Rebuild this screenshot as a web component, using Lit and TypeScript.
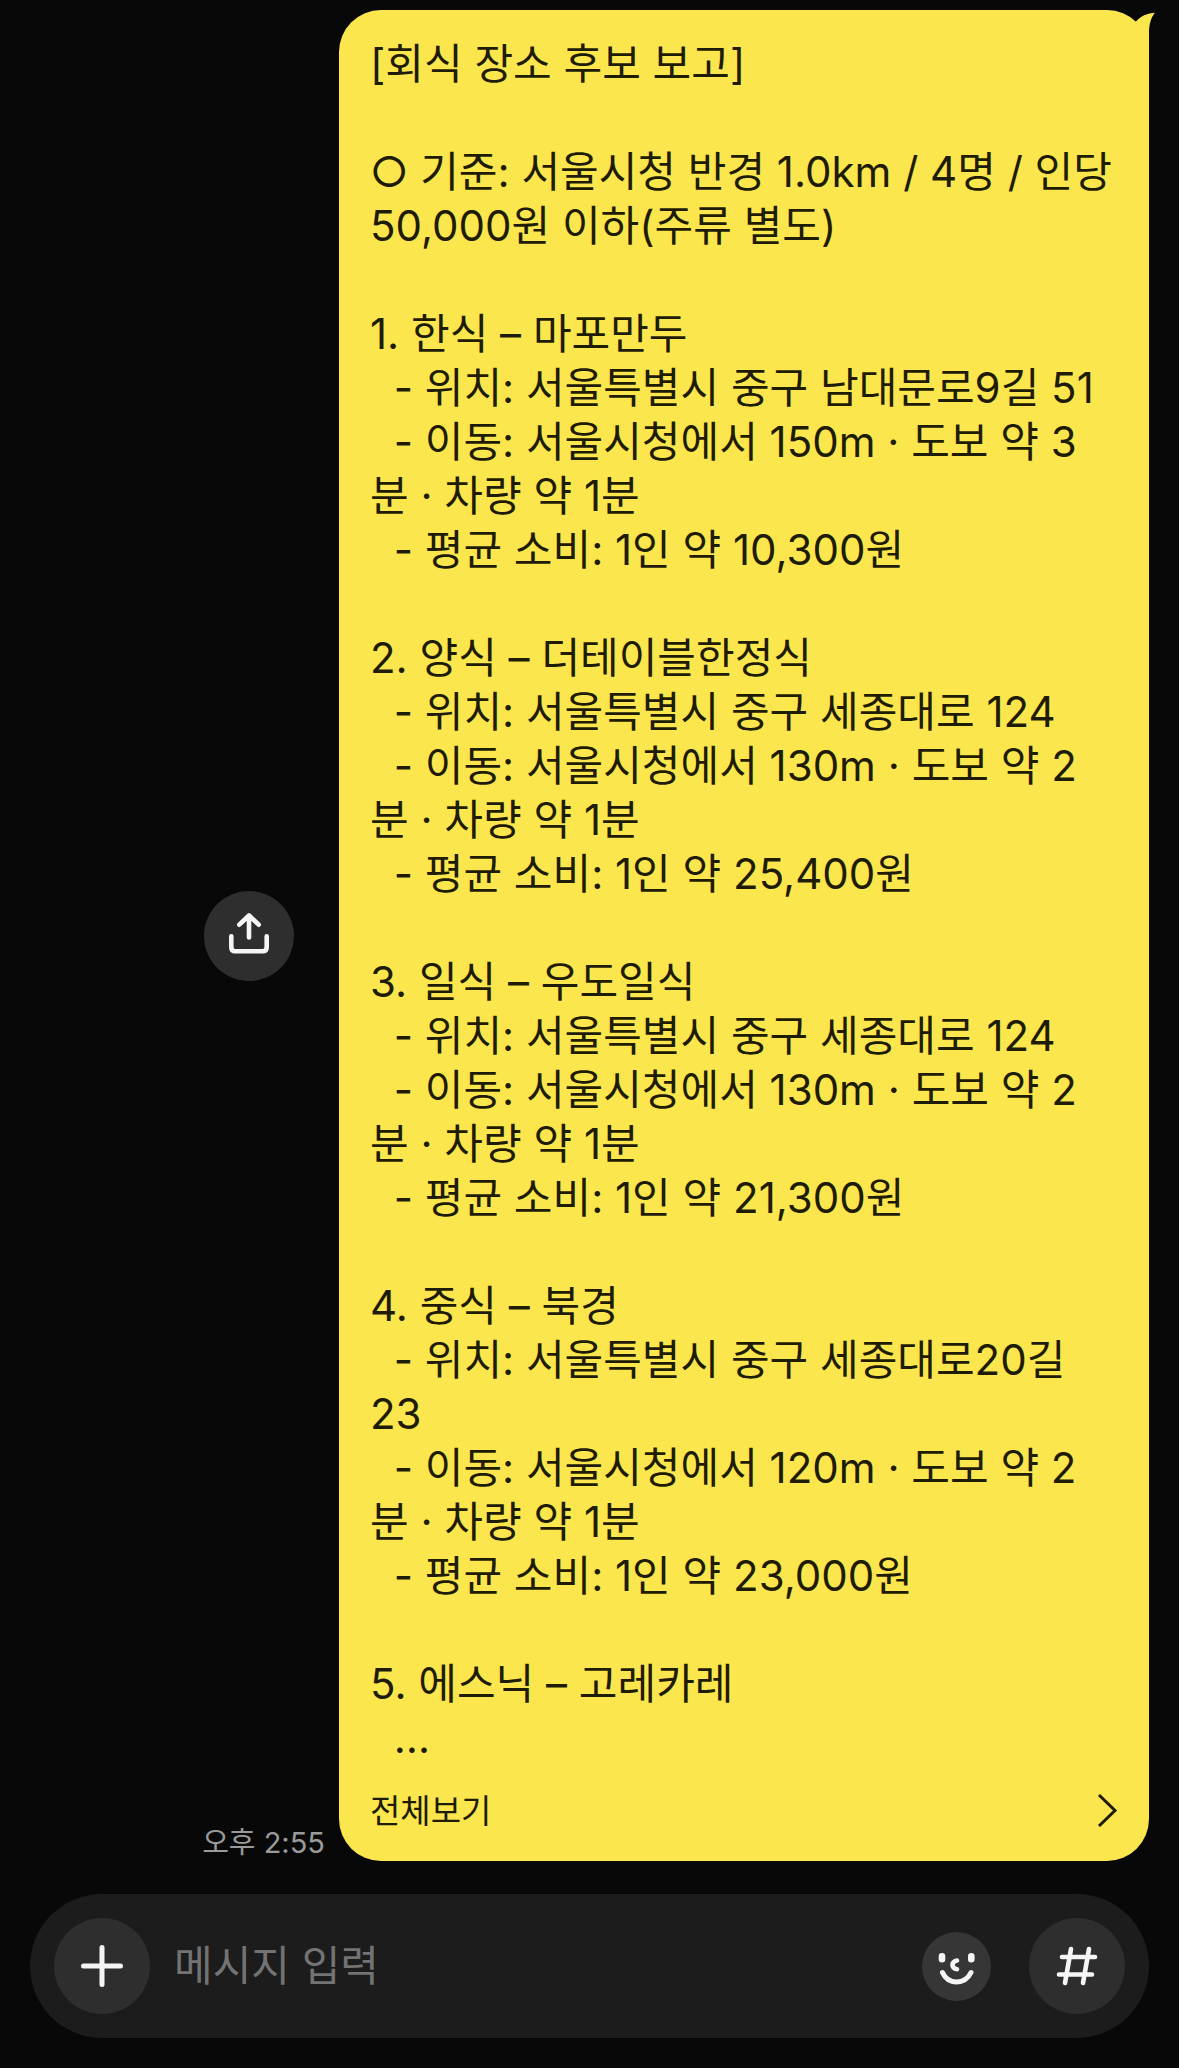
import { LitElement, html, css } from 'lit';
import { customElement, property } from 'lit/decorators.js';

// \u00a0 keeps the middle dot on the same line as the word before it
const MESSAGE = `[회식 장소 후보 보고]

○ 기준: 서울시청 반경 1.0km / 4명 / 인당 50,000원 이하(주류 별도)

1. 한식 – 마포만두
  - 위치: 서울특별시 중구 남대문로9길 51
  - 이동: 서울시청에서 150m\u00a0· 도보 약 3분\u00a0· 차량 약 1분
  - 평균 소비: 1인 약 10,300원

2. 양식 – 더테이블한정식
  - 위치: 서울특별시 중구 세종대로 124
  - 이동: 서울시청에서 130m\u00a0· 도보 약 2분\u00a0· 차량 약 1분
  - 평균 소비: 1인 약 25,400원

3. 일식 – 우도일식
  - 위치: 서울특별시 중구 세종대로 124
  - 이동: 서울시청에서 130m\u00a0· 도보 약 2분\u00a0· 차량 약 1분
  - 평균 소비: 1인 약 21,300원

4. 중식 – 북경
  - 위치: 서울특별시 중구 세종대로20길 23
  - 이동: 서울시청에서 120m\u00a0· 도보 약 2분\u00a0· 차량 약 1분
  - 평균 소비: 1인 약 23,000원

5. 에스닉 – 고레카레
  …`;

@customElement('chat-message')
export class ChatMessage extends LitElement {
  @property() text = '';
  @property() time = '';

  static styles = css`
    :host {
      display: flex;
      justify-content: flex-end;
    }

    .side {
      display: grid;
      justify-items: end;
    }

    .side__share,
    .side__time {
      grid-area: 1 / 1;
    }

    .side__share {
      align-self: center;
      display: grid;
      place-items: center;
      width: 90px;
      height: 90px;
      margin-right: 45px;
      padding: 0;
      border: 0;
      border-radius: 50%;
      background: #2e2e2e;
      color: #f5f5f5;
    }

    .side__time {
      align-self: end;
      margin-right: 14px;
      color: #9a9a9a;
      font-size: 29px;
      line-height: 36px;
      white-space: nowrap;
    }

    .bubble {
      position: relative;
      box-sizing: border-box;
      flex: 0 1 810px;
      min-width: 0;
      padding: 27px 28px 0 31px;
      border-radius: 42px;
      background: #fbe74d;
      color: #1f1c06;
    }

    .bubble__tail {
      position: absolute;
      top: 0;
      right: -6px;
      fill: #fbe74d;
    }

    .bubble__text {
      margin: 0;
      font-size: 42px;
      line-height: 54px;
      white-space: pre-wrap;
    }

    .bubble__more {
      display: flex;
      align-items: center;
      justify-content: space-between;
      width: 100%;
      padding: 22px 0 26px;
      border: 0;
      background: none;
      color: inherit;
      font: inherit;
      font-size: 33px;
      line-height: 48px;
    }
  `;

  render() {
    return html`
      <div class="side">
        <button class="side__share" aria-label="공유">
          <svg width="48" height="48" viewBox="0 0 48 48" fill="none" stroke="currentColor" stroke-width="4.600" stroke-linecap="round" stroke-linejoin="round">
            <path d="M24 25.500V4M14.300 12.700L24 3.500L33.700 12.700" />
            <path d="M6.300 24.300V35.300Q6.300 39.300 10.300 39.300H37.700Q41.700 39.300 41.700 35.300V24.300" />
          </svg>
        </button>
        <time class="side__time">${this.time}</time>
      </div>
      <div class="bubble">
        <svg class="bubble__tail" width="48" height="42" viewBox="0 0 48 42">
          <path d="M29 11.500C34 6 41 3 47.800 2.800C44 8 42 14 42 23V42H10Z" />
        </svg>
        <p class="bubble__text">${this.text}</p>
        <button class="bubble__more">
          전체보기
          <svg width="24" height="36" viewBox="0 0 24 36" fill="none" stroke="currentColor" stroke-width="3">
            <path d="M2 2L18 17.500L2 33" />
          </svg>
        </button>
      </div>
    `;
  }
}

@customElement('chat-input')
export class ChatInput extends LitElement {
  static styles = css`
    :host {
      display: flex;
      align-items: center;
      padding: 24px;
      border-radius: 72px;
      background: #1c1c1c;
    }

    .button {
      flex: none;
      display: grid;
      place-items: center;
      width: 96px;
      height: 96px;
      padding: 0;
      border: 0;
      border-radius: 50%;
      background: #2e2e2e;
      color: #f5f5f5;
    }

    .button--emoji {
      width: 69px;
      height: 69px;
      margin-right: 38px;
      background: #363636;
    }

    .field {
      flex: 1;
      min-width: 0;
      padding: 0 24px;
      border: 0;
      outline: 0;
      background: none;
      color: #f5f5f5;
      font: inherit;
      font-size: 42px;
      line-height: 54px;
    }

    .field::placeholder {
      color: #737373;
      opacity: 1;
    }
  `;

  render() {
    return html`
      <button class="button" aria-label="첨부">
        <svg width="48" height="48" viewBox="0 0 48 48" fill="none" stroke="currentColor" stroke-width="5" stroke-linecap="round">
          <path d="M24 5.500V42.500M5.500 24H42.500" />
        </svg>
      </button>
      <input class="field" type="text" placeholder="메시지 입력" aria-label="메시지 입력" />
      <button class="button button--emoji" aria-label="이모티콘">
        <svg width="69" height="69" viewBox="0 0 69 69" fill="none" stroke="currentColor" stroke-linecap="round">
          <path d="M20 24.200V27.300M49.300 24.200V27.300" stroke-width="6.600" />
          <path d="M35 28.500Q30.500 29.500 30.500 33T35 37.200" stroke-width="4.600" />
          <path d="M20.500 40.500C26 53 43 53 49 40.500" stroke-width="5" />
        </svg>
      </button>
      <button class="button" aria-label="샵검색">
        <svg width="48" height="48" viewBox="0 0 48 48" fill="none" stroke="currentColor" stroke-width="4.600" stroke-linecap="round">
          <path d="M18 7L12 41M36 7L30 41M9 15H42M6 32.500H39" />
        </svg>
      </button>
    `;
  }
}

@customElement('app-root')
export class AppRoot extends LitElement {
  static styles = css`
    :host {
      display: flex;
      flex-direction: column;
      justify-content: flex-end;
      gap: 33px;
      box-sizing: border-box;
      min-height: 100vh;
      padding: 10px 30px 30px;
      background: #080808;
      font-family: Inter, 'Noto Sans CJK KR', sans-serif;
    }
  `;

  render() {
    return html`
      <chat-message .text=${MESSAGE} time="오후 2:55"></chat-message>
      <chat-input></chat-input>
    `;
  }
}
